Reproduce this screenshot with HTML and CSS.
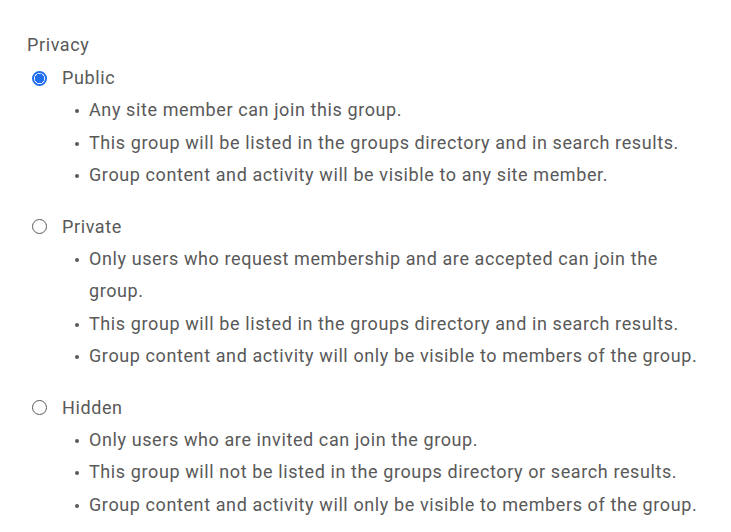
FILE: index.html
```html
<!DOCTYPE html>
<html>
<head>
<meta charset="utf-8">
<link rel="stylesheet" href="styles.css">
</head>
<body>
<fieldset class="privacy">
  <legend class="title">Privacy</legend>
  <div class="option">
    <label class="opt-label"><span class="radio checked"></span>Public</label>
    <ul class="desc">
      <li>Any site member can join this group.</li>
      <li>This group will be listed in the groups directory and in search results.</li>
      <li>Group content and activity will be visible to any site member.</li>
    </ul>
  </div>
  <div class="option">
    <label class="opt-label"><span class="radio"></span>Private</label>
    <ul class="desc">
      <li>Only users who request membership and are accepted can join the group.</li>
      <li>This group will be listed in the groups directory and in search results.</li>
      <li>Group content and activity will only be visible to members of the group.</li>
    </ul>
  </div>
  <div class="option">
    <label class="opt-label"><span class="radio"></span>Hidden</label>
    <ul class="desc">
      <li>Only users who are invited can join the group.</li>
      <li>This group will not be listed in the groups directory or search results.</li>
      <li>Group content and activity will only be visible to members of the group.</li>
    </ul>
  </div>
</fieldset>
</body>
</html>
```

FILE: styles.css
```css
html, body { margin: 0; padding: 0; background: #fff; }
body {
  font-family: Roboto, "Liberation Sans", sans-serif;
  font-size: 18px;
  letter-spacing: 0.6px;
  color: #595959;
}
.privacy {
  border: 0;
  margin: 0;
  padding: 28px 0 0 27px;
  width: 690px;
}
.title {
  padding: 0;
  float: left;
  width: 100%;
  line-height: 33px;
  margin-bottom: 1px;
}
.option { clear: both; margin-bottom: 19px; }
.opt-label {
  display: flex;
  align-items: center;
  line-height: 32px;
}
.radio {
  border: 1px solid #5a5a5a;
  border-radius: 50%;
  margin: 0 15px 0 5px;
  box-sizing: border-box;
  width: 15px;
  height: 15px;
}
.radio.checked {
  border: 2px solid #1f6ff0;
  background: radial-gradient(circle, #1f6ff0 0 4.5px, #fff 5px);
}
.desc {
  margin: 0;
  padding: 0 0 0 62px;
  list-style: none;
  width: 615px;
}
.desc li {
  position: relative;
  line-height: 32.5px;
}
.desc li::before {
  content: "";
  position: absolute;
  left: -14px;
  top: 15px;
  width: 4px;
  height: 4px;
  border-radius: 50%;
  background: #5a5a5a;
}
```
